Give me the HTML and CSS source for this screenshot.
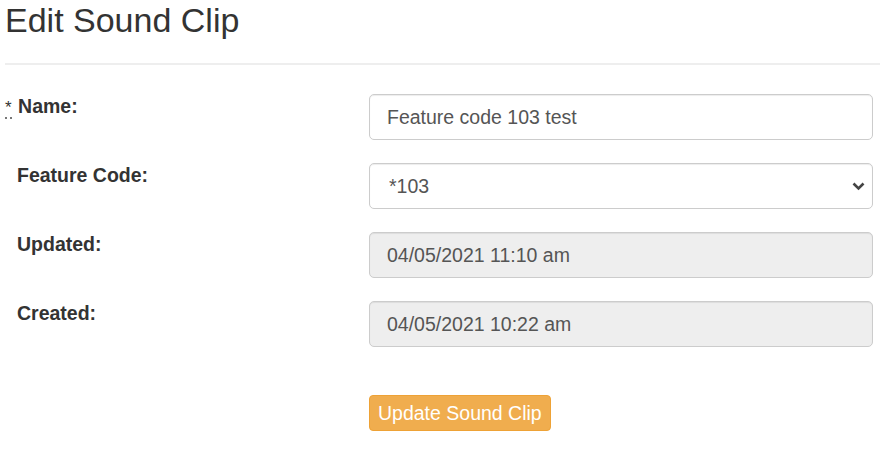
FILE: index.html
```html
<!DOCTYPE html>
<html>
<head>
<meta charset="utf-8">
<link rel="stylesheet" href="styles.css">
</head>
<body>
<div class="page">
  <h1 class="title">Edit Sound Clip</h1>
  <hr class="divider">
  <form class="form">
    <div class="form-row">
      <label class="label required"><abbr class="req" title="required">*</abbr> Name:</label>
      <input class="control" type="text" value="Feature code 103 test">
    </div>
    <div class="form-row">
      <label class="label">Feature Code:</label>
      <div class="select-wrap">
        <select class="control select"><option>*103</option></select>
        <svg class="chevron" width="13" height="9" viewBox="0 0 13 9"><path d="M1.5 1.5 L6.5 6.5 L11.5 1.5" fill="none" stroke="#444" stroke-width="2.6"/></svg>
      </div>
    </div>
    <div class="form-row">
      <label class="label">Updated:</label>
      <input class="control" type="text" value="04/05/2021 11:10 am" disabled>
    </div>
    <div class="form-row">
      <label class="label">Created:</label>
      <input class="control" type="text" value="04/05/2021 10:22 am" disabled>
    </div>
    <div class="form-row actions">
      <span></span>
      <div><button class="btn" type="button">Update Sound Clip</button></div>
    </div>
  </form>
</div>
</body>
</html>
```

FILE: styles.css
```css
* { box-sizing: border-box; }
html, body { margin: 0; padding: 0; background: #fff; }
body {
  font-family: "Liberation Sans", Arial, sans-serif;
  color: #333;
  font-size: 19.5px;
}
.page { padding: 0 7px 0 5px; width: 880px; }
.title {
  font-size: 34px;
  font-weight: normal;
  line-height: 37px;
  margin: 2px 0 0 0;
  color: #333;
}
.divider {
  border: 0;
  border-top: 2px solid #eee;
  margin: 24px -7px 0 0;
}
.form { margin-top: 29px; }
.form-row {
  display: grid;
  grid-template-columns: 364px 1fr;
  align-items: start;
  margin-bottom: 23px;
}
.label {
  font-weight: bold;
  line-height: 22px;
  padding-left: 12px;
  padding-top: 1px;
  color: #333;
}
.required { padding-left: 0; }
.req {
  font-weight: normal;
  text-decoration: none;
  border-bottom: 2px dotted #777;
  font-size: 17px;
  color: #333;
  margin-right: 1px;
}
.control {
  display: block;
  width: 100%;
  height: 46px;
  padding: 0 17px;
  font-family: "Liberation Sans", Arial, sans-serif;
  font-size: 19.5px;
  color: #555;
  background: #fff;
  border: 1px solid #ccc;
  border-radius: 5px;
  box-shadow: inset 0 1px 1px rgba(0,0,0,0.075);
  outline: none;
}
.control:disabled { background: #eee; color: #555; }
.select-wrap { position: relative; }
.select {
  -webkit-appearance: none;
  appearance: none;
  padding-left: 19px;
}
.chevron {
  position: absolute;
  right: 8px;
  top: 19px;
  pointer-events: none;
}
.actions { margin-top: 48px; }
.btn {
  font-family: "Liberation Sans", Arial, sans-serif;
  font-size: 19.5px;
  color: #fff;
  background: #f0ad4e;
  border: 1px solid #eea236;
  border-radius: 4px;
  height: 36px;
  padding: 0 8px;
  line-height: 34px;
}
```
